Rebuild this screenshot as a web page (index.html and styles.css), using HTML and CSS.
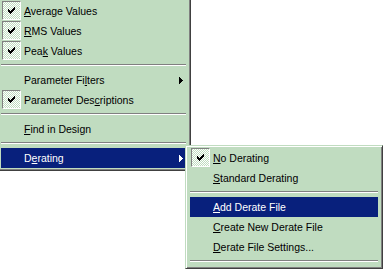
FILE: index.html
```html
<!DOCTYPE html>
<html>
<head>
<meta charset="utf-8">
<link rel="stylesheet" href="styles.css">
</head>
<body>
<div class="menu main">
  <div class="item"><span class="check on"><svg width="7" height="7" viewBox="0 0 7 7"><path d="M6 0h1v1h-1zM5 1h2v1h-2zM0 2h1v1h-1zM4 2h3v1h-3zM0 3h2v1h-2zM3 3h3v1h-3zM0 4h5v1h-5zM1 5h3v1h-3zM2 6h1v1h-1z"/></svg></span><span class="label"><u>A</u>verage Values</span></div>
  <div class="item"><span class="check on"><svg width="7" height="7" viewBox="0 0 7 7"><path d="M6 0h1v1h-1zM5 1h2v1h-2zM0 2h1v1h-1zM4 2h3v1h-3zM0 3h2v1h-2zM3 3h3v1h-3zM0 4h5v1h-5zM1 5h3v1h-3zM2 6h1v1h-1z"/></svg></span><span class="label"><u>R</u>MS Values</span></div>
  <div class="item"><span class="check on"><svg width="7" height="7" viewBox="0 0 7 7"><path d="M6 0h1v1h-1zM5 1h2v1h-2zM0 2h1v1h-1zM4 2h3v1h-3zM0 3h2v1h-2zM3 3h3v1h-3zM0 4h5v1h-5zM1 5h3v1h-3zM2 6h1v1h-1z"/></svg></span><span class="label">Pea<u>k</u> Values</span></div>
  <div class="sep"></div>
  <div class="item"><span class="check"></span><span class="label">Parameter Fi<u>l</u>ters</span><svg class="arrow" width="4" height="7" viewBox="0 0 4 7"><path d="M0 0h1v7h-1zM1 1h1v5h-1zM2 2h1v3h-1zM3 3h1v1h-1z"/></svg></div>
  <div class="item"><span class="check on"><svg width="7" height="7" viewBox="0 0 7 7"><path d="M6 0h1v1h-1zM5 1h2v1h-2zM0 2h1v1h-1zM4 2h3v1h-3zM0 3h2v1h-2zM3 3h3v1h-3zM0 4h5v1h-5zM1 5h3v1h-3zM2 6h1v1h-1z"/></svg></span><span class="label">Parameter Des<u>c</u>riptions</span></div>
  <div class="sep"></div>
  <div class="item"><span class="check"></span><span class="label"><u>F</u>ind in Design</span></div>
  <div class="sep"></div>
  <div class="item hot"><span class="check"></span><span class="label">D<u>e</u>rating</span><svg class="arrow" width="4" height="7" viewBox="0 0 4 7"><path d="M0 0h1v7h-1zM1 1h1v5h-1zM2 2h1v3h-1zM3 3h1v1h-1z"/></svg></div>
</div>
<div class="menu sub">
  <div class="item"><span class="check on"><svg width="7" height="7" viewBox="0 0 7 7"><path d="M6 0h1v1h-1zM5 1h2v1h-2zM0 2h1v1h-1zM4 2h3v1h-3zM0 3h2v1h-2zM3 3h3v1h-3zM0 4h5v1h-5zM1 5h3v1h-3zM2 6h1v1h-1z"/></svg></span><span class="label"><u>N</u>o Derating</span></div>
  <div class="item"><span class="check"></span><span class="label"><u>S</u>tandard Derating</span></div>
  <div class="sep"></div>
  <div class="item hot"><span class="check"></span><span class="label"><u>A</u>dd Derate File</span></div>
  <div class="item"><span class="check"></span><span class="label"><u>C</u>reate New Derate File</span></div>
  <div class="item"><span class="check"></span><span class="label"><u>D</u>erate File Settings...</span></div>
  <div class="sep"></div>
</div>
</body>
</html>
```
FILE: styles.css
```css
html, body {
  margin: 0;
  padding: 0;
  background: #ffffff;
  width: 383px;
  height: 272px;
  overflow: hidden;
}
body {
  position: relative;
  font-family: "Liberation Sans", Arial, sans-serif;
  font-size: 10.5px;
  color: #000;
}
.menu {
  position: absolute;
  background: #c0dcc0;
  border: 1px solid;
  border-color: #c0dcc0 #404040 #404040 #c0dcc0;
  box-shadow: inset 1px 1px #ffffff, inset -1px -1px #808080;
  padding: 2px 4px 2px 4px;
  display: flex;
  flex-direction: column;
}
.main {
  left: -4px;
  top: -2px;
  width: 185px;
  z-index: 1;
}
.sub {
  left: 185px;
  top: 145px;
  width: 188px;
  z-index: 2;
}
.item {
  height: 20px;
  display: flex;
  align-items: center;
}
.check {
  width: 19px;
  height: 19px;
  margin-left: 1px;
  box-sizing: border-box;
  align-self: flex-start;
  display: flex;
  align-items: center;
  justify-content: center;
  flex: none;
}
.check.on {
  border: 1px solid;
  border-color: #808080 #ffffff #ffffff #808080;
  background: repeating-conic-gradient(#ffffff 0 25%, #c0dcc0 0 50%) 0 0 / 2px 2px;
}
.check svg {
  display: block;
  fill: #000;
  shape-rendering: crispEdges;
}
.label {
  margin-left: 3px;
  white-space: nowrap;
}
.label u {
  text-decoration-skip-ink: none;
}
.arrow {
  margin-left: auto;
  margin-right: 3px;
  fill: #000;
  shape-rendering: crispEdges;
  flex: none;
}
.hot {
  background: #08207c;
  color: #ffffff;
}
.hot .arrow {
  fill: #ffffff;
}
.sep {
  height: 9px;
  box-sizing: border-box;
  padding-top: 3px;
}
.sep::before {
  content: "";
  display: block;
  height: 1px;
  background: #808080;
  border-bottom: 1px solid #ffffff;
}
```
